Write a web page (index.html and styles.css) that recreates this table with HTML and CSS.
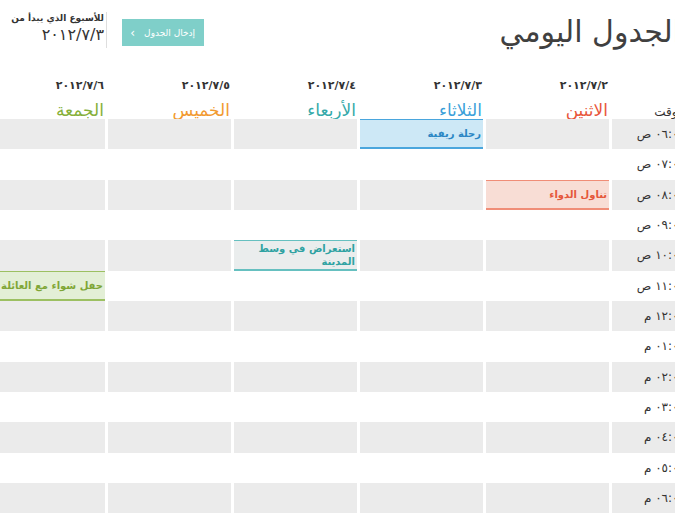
FILE: index.html
```html
<!DOCTYPE html>
<html lang="ar">
<head>
<meta charset="utf-8">
<title>الجدول اليومي</title>
<link rel="stylesheet" href="styles.css">
</head>
<body>
<div class="page">
  <header class="top">
    <h1 class="title">الجدول اليومي</h1>
    <div class="controls">
      <div class="week">
        <div class="week-label">للأسبوع الذي يبدأ من</div>
        <div class="week-date">٢٠١٢/٧/٣</div>
      </div>
      <div class="sep"></div>
      <button class="btn" type="button"><span class="btn-text">إدخال الجدول</span><span class="chev">›</span></button>
    </div>
  </header>

  <div class="grid">
    <div class="hcell time-h"><span class="h-time">الوقت</span></div>
    <div class="hcell"><div class="hdate">٢٠١٢/٧/٢</div><div class="hday mon">الاثنين</div></div>
    <div class="hcell"><div class="hdate">٢٠١٢/٧/٣</div><div class="hday tue">الثلاثاء</div></div>
    <div class="hcell"><div class="hdate">٢٠١٢/٧/٤</div><div class="hday wed">الأربعاء</div></div>
    <div class="hcell"><div class="hdate">٢٠١٢/٧/٥</div><div class="hday thu">الخميس</div></div>
    <div class="hcell"><div class="hdate">٢٠١٢/٧/٦</div><div class="hday fri">الجمعة</div></div>

    <div class="cell time g">٠٦:٠٠ ص</div>
    <div class="cell g"></div>
    <div class="cell g"><div class="ev ev-tue">رحلة ريفية</div></div>
    <div class="cell g"></div>
    <div class="cell g"></div>
    <div class="cell g"></div>

    <div class="cell time">٠٧:٠٠ ص</div>
    <div class="cell"></div><div class="cell"></div><div class="cell"></div><div class="cell"></div><div class="cell"></div>

    <div class="cell time g">٠٨:٠٠ ص</div>
    <div class="cell g"><div class="ev ev-mon">تناول الدواء</div></div>
    <div class="cell g"></div>
    <div class="cell g"></div>
    <div class="cell g"></div>
    <div class="cell g"></div>

    <div class="cell time">٠٩:٠٠ ص</div>
    <div class="cell"></div><div class="cell"></div><div class="cell"></div><div class="cell"></div><div class="cell"></div>

    <div class="cell time g">١٠:٠٠ ص</div>
    <div class="cell g"></div>
    <div class="cell g"></div>
    <div class="cell g"><div class="ev ev-wed">استعراض في وسط المدينة</div></div>
    <div class="cell g"></div>
    <div class="cell g"></div>

    <div class="cell time">١١:٠٠ ص</div>
    <div class="cell"></div><div class="cell"></div><div class="cell"></div><div class="cell"></div>
    <div class="cell"><div class="ev ev-fri">حفل شواء مع العائلة</div></div>

    <div class="cell time g">١٢:٠٠ م</div>
    <div class="cell g"></div><div class="cell g"></div><div class="cell g"></div><div class="cell g"></div><div class="cell g"></div>

    <div class="cell time">٠١:٠٠ م</div>
    <div class="cell"></div><div class="cell"></div><div class="cell"></div><div class="cell"></div><div class="cell"></div>

    <div class="cell time g">٠٢:٠٠ م</div>
    <div class="cell g"></div><div class="cell g"></div><div class="cell g"></div><div class="cell g"></div><div class="cell g"></div>

    <div class="cell time">٠٣:٠٠ م</div>
    <div class="cell"></div><div class="cell"></div><div class="cell"></div><div class="cell"></div><div class="cell"></div>

    <div class="cell time g">٠٤:٠٠ م</div>
    <div class="cell g"></div><div class="cell g"></div><div class="cell g"></div><div class="cell g"></div><div class="cell g"></div>

    <div class="cell time">٠٥:٠٠ م</div>
    <div class="cell"></div><div class="cell"></div><div class="cell"></div><div class="cell"></div><div class="cell"></div>

    <div class="cell time g">٠٦:٠٠ م</div>
    <div class="cell g"></div><div class="cell g"></div><div class="cell g"></div><div class="cell g"></div><div class="cell g"></div>
  </div>
</div>
</body>
</html>
```

FILE: styles.css
```css
html, body {
  margin: 0;
  padding: 0;
  background: #ffffff;
  overflow: hidden;
}

body {
  width: 675px;
  height: 520px;
  font-family: "DejaVu Sans", sans-serif;
  color: #333333;
}

.page {
  direction: rtl;
  width: 708px;
  margin-left: -18px;
}

/* ---------- top header ---------- */
.top {
  display: flex;
  justify-content: space-between;
  align-items: flex-start;
  height: 70px;
}

.title {
  margin: 14px 9px 0 0;
  font-size: 30px;
  font-weight: normal;
  line-height: 36px;
  color: #404040;
  white-space: nowrap;
}

.controls {
  direction: ltr;
  display: flex;
  align-items: flex-start;
  padding-left: 18px;
  padding-top: 11px;
}

.week {
  direction: rtl;
  width: 104px;
  text-align: right;
}

.week-label {
  font-size: 9px;
  font-weight: bold;
  line-height: 14px;
  color: #333333;
  white-space: nowrap;
}

.week-date {
  font-size: 16px;
  line-height: 20px;
  color: #333333;
  margin-top: 0;
}

.sep {
  width: 1px;
  height: 36px;
  background: #dedede;
  margin: 1px 0 0 2px;
}

.btn {
  direction: rtl;
  display: flex;
  align-items: center;
  justify-content: flex-start;
  gap: 9px;
  width: 82px;
  height: 27px;
  margin: 8px 0 0 15px;
  padding: 0 9px 0 0;
  border: none;
  background: #7fcfc9;
  color: #ffffff;
  font-family: "DejaVu Sans", sans-serif;
  font-size: 9px;
  white-space: nowrap;
}

.chev {
  font-size: 12px;
  line-height: 1;
}

/* ---------- grid ---------- */
.grid {
  display: grid;
  grid-template-columns: 78px repeat(5, 123px);
  grid-template-rows: 49px;
  grid-auto-rows: 30.34px;
  column-gap: 3px;
}

.hcell {
  text-align: right;
  padding-top: 9px;
}

.hdate {
  font-size: 11px;
  font-weight: bold;
  line-height: 13px;
  color: #333333;
  padding-right: 1px;
}

.hday {
  font-size: 17px;
  line-height: 22px;
  margin-top: 7px;
  padding-right: 1px;
}

.mon { color: #e8553a; }
.tue { color: #3a9fd9; }
.wed { color: #34a9a9; }
.thu { color: #f29a30; }
.fri { color: #86b03a; }

.time-h {
  padding-top: 31px;
  padding-right: 5px;
}

.h-time {
  font-size: 12px;
  line-height: 16px;
  color: #333333;
}

.cell {
  position: relative;
  min-width: 0;
}

.cell.g {
  background: #ebebeb;
}

.time {
  display: flex;
  align-items: center;
  padding-right: 5px;
  font-size: 12px;
  white-space: nowrap;
  color: #333333;
}

/* ---------- events ---------- */
.ev {
  box-sizing: border-box;
  height: 100%;
  display: flex;
  align-items: center;
  padding: 0 2px 0 4px;
  font-size: 10px;
  font-weight: bold;
  line-height: 13px;
  border-top: 1px solid;
  border-bottom: 2px solid;
}

.ev-tue {
  background: #cde8f6;
  border-color: #4aa6dd;
  color: #2a86c4;
}

.ev-mon {
  background: #f8ddd5;
  border-color: #f08d77;
  color: #e5573a;
}

.ev-wed {
  background: #eaeded;
  border-color: #66c0c0;
  color: #2fa2a2;
}

.ev-fri {
  background: #e3efd6;
  border-color: #9cc062;
  color: #7fa636;
}
```
